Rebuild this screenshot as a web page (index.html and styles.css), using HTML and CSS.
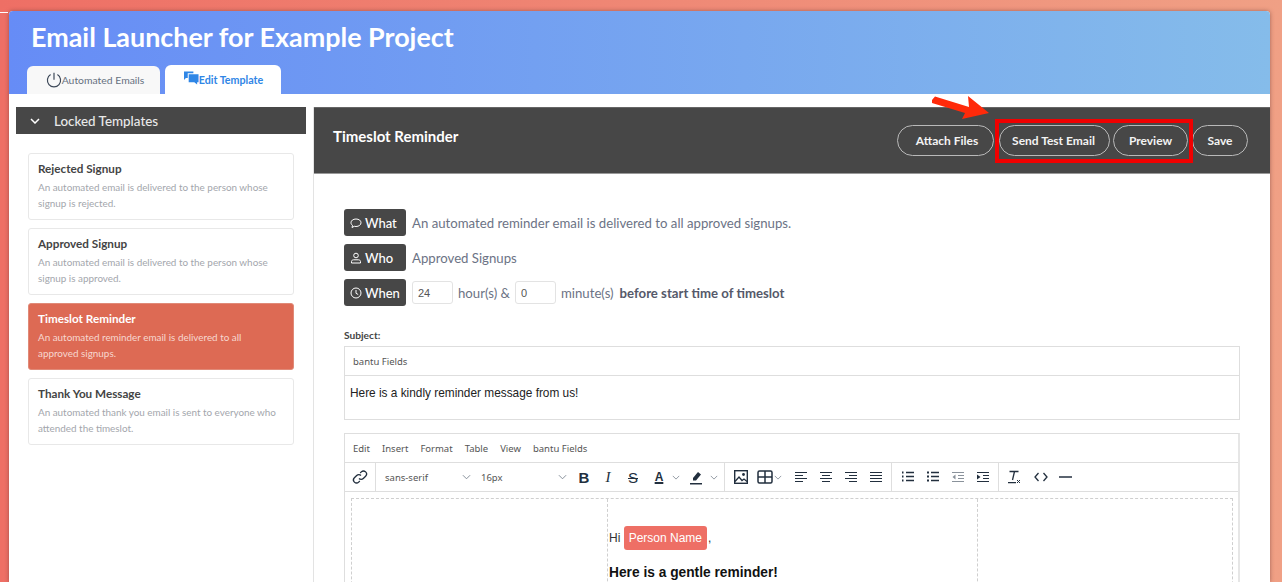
FILE: index.html
```html
<!DOCTYPE html>
<html lang="en">
<head>
<meta charset="utf-8">
<title>Email Launcher</title>
<link rel="stylesheet" href="styles.css">
</head>
<body>
<div class="app">
  <header class="hero">
    <h1>Email Launcher for Example Project</h1>
    <nav class="tabs">
      <a class="tab">
        <svg class="tab-ico" viewBox="0 0 16 16" width="16" height="16"><path d="M4.600 2.600a6.600 6.600 0 1 0 6.800 0M8 .8v7" fill="none" stroke="#3f4a5a" stroke-width="1.200"/></svg>
        Automated Emails</a>
      <a class="tab tab-on">
        <svg class="tab-ico2" viewBox="0 0 16 15" width="15" height="15"><path d="M0 0h10v2H4v5H2L0 9z" fill="#2f86e6"/><path d="M5 3h10.500v8.500H14V14l-3-2.500H5z" fill="#2f86e6"/></svg>
        Edit Template</a>
    </nav>
  </header>
  <div class="main">
    <aside class="side">
      <div class="side-head">
        <svg viewBox="0 0 10 6" width="10" height="6"><path d="M1 1l4 4 4-4" fill="none" stroke="#fff" stroke-width="1.500"/></svg>
        <span>Locked Templates</span>
      </div>
      <ul class="cards">
        <li class="card"><b>Rejected Signup</b><p>An automated email is delivered to the person whose signup is rejected.</p></li>
        <li class="card"><b>Approved Signup</b><p>An automated email is delivered to the person whose signup is approved.</p></li>
        <li class="card card-on"><b>Timeslot Reminder</b><p>An automated reminder email is delivered to all approved signups.</p></li>
        <li class="card"><b>Thank You Message</b><p>An automated thank you email is sent to everyone who attended the timeslot.</p></li>
      </ul>
    </aside>
    <section class="content">
      <div class="bar">
        <h2>Timeslot Reminder</h2>
        <div class="actions">
          <button class="pill p-attach">Attach Files</button>
          <button class="pill p-test">Send Test Email</button>
          <button class="pill p-prev">Preview</button>
          <button class="pill p-save">Save</button>
          <span class="redbox"></span>
          <svg class="arrow" viewBox="0 0 58 24" width="58" height="24"><path d="M0 4L3 .5 37 11 36 0 57 17 30 23 33 17 0 7z" fill="#ff2a0a"/></svg>
        </div>
      </div>
      <div class="body">
        <div class="meta">
          <div class="row"><span class="tag"><svg viewBox="0 0 12 12" width="12" height="12"><path d="M6 2C3 2 1 3.600 1 5.700c0 1.100.6 2 1.500 2.700L2 10.500l2.300-1.200c.5.100 1.100.2 1.700.2 3 0 5-1.700 5-3.800S9 2 6 2z" fill="none" stroke="#fff"/></svg>What</span><span>An automated reminder email is delivered to all approved signups.</span></div>
          <div class="row"><span class="tag"><svg viewBox="0 0 12 12" width="12" height="12"><circle cx="6" cy="3.500" r="2.300" fill="none" stroke="#fff"/><path d="M1.500 11V9.500c0-1 1-1.700 2-1.700h5c1 0 2 .7 2 1.700V11z" fill="none" stroke="#fff"/></svg>Who</span><span>Approved Signups</span></div>
          <div class="row"><span class="tag"><svg viewBox="0 0 12 12" width="12" height="12"><circle cx="6" cy="6" r="5" fill="none" stroke="#fff"/><path d="M6 3v3.300l2.200 1.200" fill="none" stroke="#fff"/></svg>When</span><input class="num" value="24"><span class="u1">hour(s) &amp;</span><input class="num" value="0"><span class="u2">minute(s)</span><b>before start time of timeslot</b></div>
        </div>
        <label class="subj-label">Subject:</label>
        <div class="subj">
          <div class="subj-menu">bantu Fields</div>
          <div class="subj-text">Here is a kindly reminder message from us!</div>
        </div>
        <div class="editor">
          <div class="menu"><span>Edit</span><span>Insert</span><span>Format</span><span>Table</span><span>View</span><span>bantu Fields</span></div>
          <div class="tools">
            <div class="grp g-link"><svg viewBox="0 0 16 16" width="16" height="16"><path d="M7 9.500a3 3 0 0 0 4.300 0l2.300-2.300a3 3 0 0 0-4.300-4.300L8.200 4M9 6.500a3 3 0 0 0-4.300 0L2.400 8.800a3 3 0 0 0 4.300 4.300L7.800 12" fill="none" stroke="#222f3e" stroke-width="1.300"/></svg></div>
            <div class="grp g-font">
              <span class="sel s1">sans-serif<svg viewBox="0 0 10 6" width="9" height="6"><path d="M1 1l4 4 4-4" fill="none" stroke="#7b8590"/></svg></span>
              <span class="sel s2">16px<svg viewBox="0 0 10 6" width="9" height="6"><path d="M1 1l4 4 4-4" fill="none" stroke="#7b8590"/></svg></span>
              <span class="t t-b">B</span>
              <span class="t t-i">I</span>
              <span class="t t-s">S</span>
              <span class="t t-a">A</span><svg class="car" viewBox="0 0 10 6" width="8" height="5"><path d="M1 1l4 4 4-4" fill="none" stroke="#7b8590"/></svg>
              <svg class="hl" viewBox="0 0 16 16" width="16" height="16"><path d="M5 9l5-6 3 2.500-5 6H5z" fill="#222f3e"/><path d="M2 14h12v1.500H2z" fill="#222f3e"/></svg><svg class="car c-hl" viewBox="0 0 10 6" width="8" height="5"><path d="M1 1l4 4 4-4" fill="none" stroke="#7b8590"/></svg>
            </div>
            <div class="grp g-ins">
              <svg viewBox="0 0 16 16" width="16" height="16"><rect x="1.700" y="1.700" width="12.600" height="12.600" fill="none" stroke="#222f3e" stroke-width="1.400"/><circle cx="10.500" cy="5.500" r="1.400" fill="#222f3e"/><path d="M2 12.500l4-4.500 3 3.500 2-1.500 3 2.500" fill="none" stroke="#222f3e" stroke-width="1.300"/></svg>
              <svg class="i-tab" viewBox="0 0 16 14" width="16" height="14"><rect x="1" y="1" width="14" height="12" rx="1.500" fill="none" stroke="#222f3e" stroke-width="1.500"/><path d="M1 7h14M8 1v12" stroke="#222f3e" stroke-width="1.500"/></svg><svg class="car c-tab" viewBox="0 0 10 6" width="8" height="5"><path d="M1 1l4 4 4-4" fill="none" stroke="#7b8590"/></svg>
              <svg class="al al-first" viewBox="0 0 14 12" width="14" height="12"><path d="M1 1.500h12M1 4.500h8M1 7.500h12M1 10.500h8" stroke="#222f3e" stroke-width="1.200"/></svg>
              <svg class="al" viewBox="0 0 14 12" width="14" height="12"><path d="M1 1.500h12M3 4.500h8M1 7.500h12M3 10.500h8" stroke="#222f3e" stroke-width="1.200"/></svg>
              <svg class="al" viewBox="0 0 14 12" width="14" height="12"><path d="M1 1.500h12M5 4.500h8M1 7.500h12M5 10.500h8" stroke="#222f3e" stroke-width="1.200"/></svg>
              <svg class="al" viewBox="0 0 14 12" width="14" height="12"><path d="M1 1.500h12M1 4.500h12M1 7.500h12M1 10.500h12" stroke="#222f3e" stroke-width="1.200"/></svg>
            </div>
            <div class="grp g-list">
              <svg viewBox="0 0 14 12" width="14" height="12"><path d="M5 1.500h8M5 5.500h8M5 9.500h8" stroke="#222f3e" stroke-width="1.300"/><path d="M1 .5h1.500v2H1zM1 4.500h1.500v2H1zM1 8.500h1.500v2H1z" fill="#222f3e"/></svg>
              <svg viewBox="0 0 14 12" width="14" height="12"><path d="M5 1.500h8M5 5.500h8M5 9.500h8" stroke="#222f3e" stroke-width="1.300"/><path d="M1 .5h2v2H1zM1 4.500h2v2H1zM1 8.500h2v2H1z" fill="#222f3e"/></svg>
              <svg viewBox="0 0 14 12" width="14" height="12"><path d="M1 1.500h12M7 4.500h6M7 7.500h6M1 10.500h12" stroke="#8a929b" stroke-width="1.200"/><path d="M4.500 3.500L1.500 6l3 2.500z" fill="#8a929b"/></svg>
              <svg viewBox="0 0 14 12" width="14" height="12"><path d="M1 1.500h12M7 4.500h6M7 7.500h6M1 10.500h12" stroke="#222f3e" stroke-width="1.200"/><path d="M1 3.500L4.500 6 1 8.500z" fill="#222f3e"/></svg>
            </div>
            <div class="grp g-misc">
              <svg viewBox="0 0 14 14" width="14" height="14"><path d="M2.500 1.500h9M7.500 1.500L5.500 10M1 12.700h8" stroke="#222f3e" stroke-width="1.300" fill="none"/><path d="M10 10l3 3M13 10l-3 3" stroke="#222f3e"/></svg>
              <svg class="i-code" viewBox="0 0 14 10" width="14" height="10"><path d="M4.500 1L1 5l3.500 4M9.500 1L13 5 9.500 9" fill="none" stroke="#222f3e" stroke-width="1.300"/></svg>
              <svg class="i-hr" viewBox="0 0 14 4" width="13" height="4"><path d="M0 2h14" stroke="#222f3e" stroke-width="1.600"/></svg>
            </div>
          </div>
          <div class="canvas">
            <div class="doc">
              <div class="doc-mid">
                <p class="hi">Hi <span class="field">Person Name</span>,</p>
                <p class="gentle">Here is a gentle reminder!</p>
              </div>
            </div>
          </div>
        </div>
      </div>
    </section>
  </div>
</div>
</body>
</html>
```

FILE: styles.css
```css
html, body { margin: 0; height: 582px; overflow: hidden; }
body {
  position: relative;
  background: linear-gradient(90deg, #ee6f65 0%, #f0a085 100%);
  font-family: Lato, "Liberation Sans", sans-serif;
  color: #3f3f3f;
}
body::before {
  content: "";
  position: absolute;
  left: 0;
  top: 12px;
  width: 8px;
  height: 1px;
  background: #fff;
}
.app {
  margin: 11px 12px 0 9px;
  height: 571px;
  background: #fff;
  border-radius: 4px 4px 0 0;
  box-shadow: 0 0 4px rgba(110, 60, 55, .6);
  overflow: hidden;
}
.hero {
  height: 83px;
  background: linear-gradient(90deg, #668cf6 0%, #85bcea 100%);
  box-sizing: border-box;
  padding: 9px 0 0 22px;
  display: flex;
  flex-direction: column;
}
h1 { margin: 0; font-size: 26.900px; line-height: 33px; font-weight: 700; color: #fff; height: 45px; }
.tabs { display: flex; gap: 5px; margin-left: -4px; align-items: flex-end; }
.tab {
  box-sizing: border-box;
  width: 133px;
  height: 28px;
  padding-left: 3px;
  background: #f8f8f8;
  border-radius: 6px 6px 0 0;
  font-size: 10.400px;
  color: #667080;
  display: flex;
  align-items: center;
  justify-content: center;
}
.tab-on { width: 116px; height: 29px; padding-left: 1px; background: #fff; color: #2f86e6; font-weight: 700; font-size: 10.700px; }
.tab-ico2 { margin-top: -3px; }
.main { display: flex; }
.side { width: 290px; margin: 13px 0 0 7px; flex: none; }
.side-head {
  height: 26px;
  padding-top: 1px;
  box-sizing: content-box;
  background: #474747;
  color: #e9e9e9;
  display: flex;
  align-items: center;
  font-size: 13.400px;
  padding-left: 14px;
  width: 276px;
  margin-bottom: 19px;
}
.side-head span { margin-left: 14px; font-weight: 500; }
.cards { list-style: none; margin: 0 12px; padding: 0; display: flex; flex-direction: column; gap: 8px; }
.card {
  box-sizing: border-box;
  height: 67px;
  border: 1px solid #e8e8e8;
  border-radius: 3px;
  padding: 7px 12px 0 9px;
  background: #fff;
}
.card b { display: block; font-size: 11.700px; line-height: 14px; color: #444; }
.card p { margin: 4px 0 0; font-size: 9.900px; line-height: 16px; color: #a3a6ac; }
.card-on { background: #dd6a54; border-color: #e08a78; }
.card-on b { color: #fff; }
.card-on p { color: #f7d8d0; }
.content { flex: 1; min-width: 0; margin: 13px 0 0 7px; border-left: 1px solid #e3e3e3; }
.bar {
  height: 65px;
  background: #474747;
  border-bottom: 1px solid #999;
  border-top: 1px solid #666;
  display: flex;
  justify-content: space-between;
  padding: 0 22px 0 19px;
  align-items: flex-start;
}
h2 { margin: 19px 0 0; font-size: 15px; line-height: 18px; color: #fff; font-weight: 700; }
.actions { position: relative; display: flex; margin-top: 17px; }
.pill {
  height: 31px;
  border: 1px solid #b9b9b9;
  border-radius: 16px;
  background: transparent;
  color: #f3f3f3;
  font: 700 12px Lato, "Liberation Sans", sans-serif;
  padding: 0;
}
.p-attach { width: 97px; padding-left: 3px; }
.p-test { width: 111px; margin-left: 5px; padding-right: 2px; }
.p-prev { width: 75px; margin-left: 3px; }
.p-save { width: 56px; margin-left: 4px; }
.redbox {
  position: absolute;
  left: 98px;
  top: -6px;
  width: 190px;
  height: 36px;
  border: 4px solid #f00000;
  pointer-events: none;
}
.arrow { position: absolute; left: 35px; top: -29px; }
.body { padding: 0 0 0 30px; }
.meta { margin-top: 35px; display: flex; flex-direction: column; gap: 8px; font-size: 13.200px; color: #6c7385; }
.row { display: flex; align-items: center; height: 27px; }
.tag {
  box-sizing: border-box;
  width: 62px;
  height: 27px;
  background: #474747;
  border-radius: 3px;
  color: #fff;
  font-size: 13px;
  font-weight: 500;
  display: flex;
  align-items: center;
  gap: 3px;
  padding-left: 6px;
  margin-right: 6px;
}
.num {
  box-sizing: border-box;
  width: 41px;
  height: 23px;
  border: 1px solid #e3e3e3;
  border-radius: 3px;
  padding: 0 4px 0 5px;
  font: 11px "Liberation Sans", sans-serif;
  color: #555;
}
.u1 { margin: 0 5px 0 5px; }
.u2 { margin: 0 6px 0 5px; }
.row b { color: #55596a; }
.subj-label { display: block; margin-top: 23px; font-size: 10.200px; line-height: 12px; font-weight: 700; color: #444; }
.subj { margin-top: 5px; width: 896px; box-sizing: border-box; border: 1px solid #dedede; }
.subj-menu { height: 28px; line-height: 29px; border-bottom: 1px solid #dedede; font-size: 9.500px; padding-left: 8px; color: #555; font-family: "Noto Sans", sans-serif; }
.subj-text { height: 43px; font: 11.850px/35px "Liberation Sans", sans-serif; padding-left: 5px; color: #222; }
.editor { margin-top: 13px; width: 896px; box-sizing: border-box; border: 1px solid #dedede; border-right: 2px solid #e6e6e6; border-bottom: 0; }
.menu { height: 28px; border-bottom: 1px solid #dedede; display: flex; gap: 12px; align-items: center; padding-left: 8px; font-size: 9.500px; color: #555; font-family: "Noto Sans", sans-serif; }
.tools { height: 28px; border-bottom: 1px solid #dedede; display: flex; }
.grp { display: flex; align-items: center; border-right: 1px solid #dedede; height: 28px; box-sizing: border-box; }
.g-link { width: 31px; justify-content: center; }
.g-font { width: 349px; padding-left: 9px; }
.g-ins { width: 167px; padding-left: 8px; }
.i-tab { margin-left: 8px; }
.c-tab { margin-left: 3px; }
.al { margin-left: 11px; }
.al-first { margin-left: 12px; }
.g-list { width: 107px; padding-left: 9px; gap: 11px; }
.g-misc { border: 0; padding-left: 8px; }
.i-code { margin-left: 13px; }
.i-hr { margin-left: 11px; }
.sel { display: flex; justify-content: space-between; align-items: center; font-size: 9.500px; color: #555; font-family: "Noto Sans", sans-serif; }
.s1 { width: 86px; margin-right: 10px; }
.s2 { width: 86px; margin-right: 5px; }
.t { display: block; color: #222f3e; font-family: "Liberation Sans", sans-serif; width: 24px; text-align: center; }
.t-b { font-weight: 700; font-size: 15px; }
.t-i { font: italic 15px "Liberation Serif", serif; }
.t-s { text-decoration: line-through; font-size: 15px; margin-left: 1px; }
.t-a { text-decoration: underline; text-decoration-thickness: 2px; font-size: 12px; font-weight: 700; margin-left: 2px; }
.car { margin-left: 1px; }
.hl { margin-left: 8px; }
.c-hl { margin-left: 6px; }
.canvas { padding: 6px 5px 0 6px; }
.doc { border: 1px dashed #cfcfcf; border-bottom: 0; height: 100px; padding-left: 255px; }
.doc-mid { width: 368px; height: 100px; border-left: 1px dashed #cfcfcf; border-right: 1px dashed #cfcfcf; padding: 27px 0 0 1px; font-family: "Liberation Sans", sans-serif; color: #333; font-size: 12px; }
.hi { margin: 0; line-height: 24px; }
.field { display: inline-block; background: #ee6f65; color: #fff; padding: 0 5px; border-radius: 3px; line-height: 24px; font-size: 12px; margin: 0 1px 0 0; }
.gentle { margin: 15px 0 0; font-size: 13.750px; font-weight: 700; color: #111; }
```
